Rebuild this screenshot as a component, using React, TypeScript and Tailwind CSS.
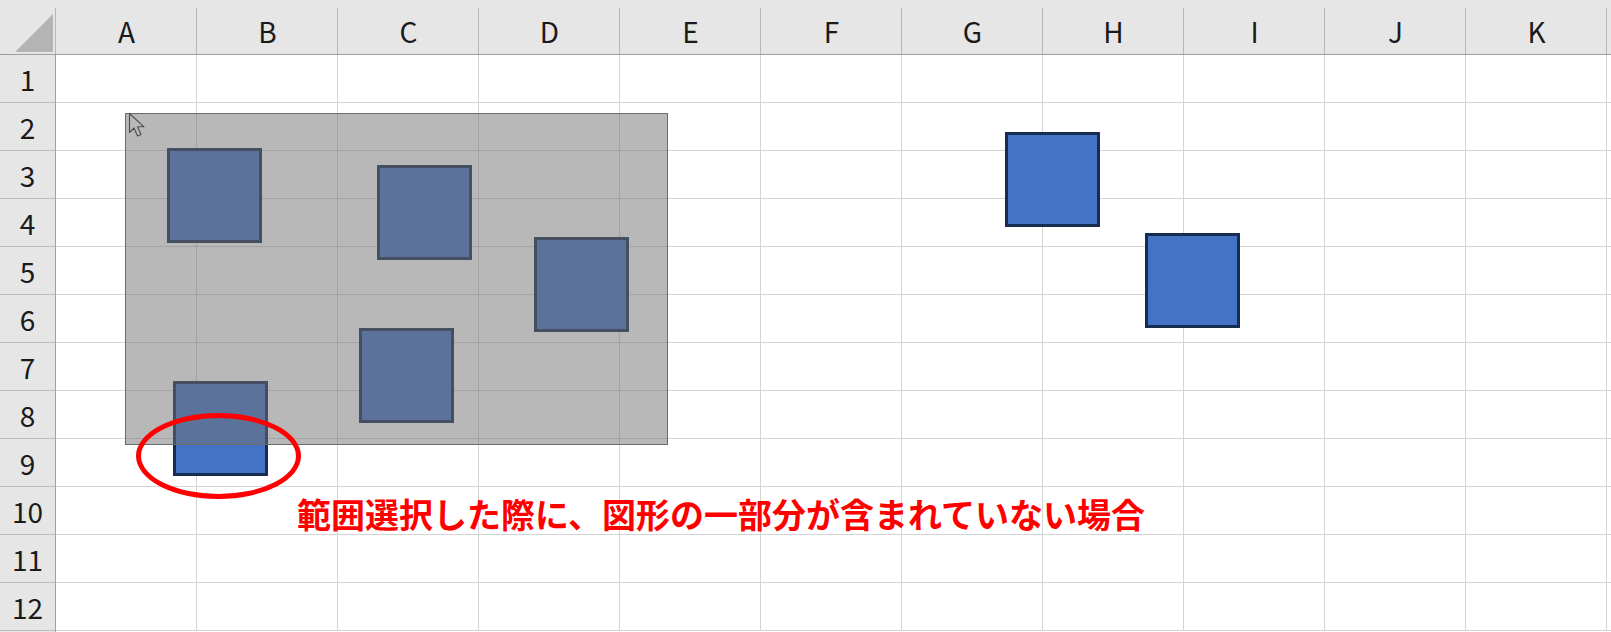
import React from 'react';

const COLS = ['A', 'B', 'C', 'D', 'E', 'F', 'G', 'H', 'I', 'J', 'K'];
const ROWS = Array.from({ length: 12 }, (_, i) => i + 1);

// shapes laid on the sheet: [left, top]
const SHAPES: [number, number][] = [
  [167, 148],
  [377, 165],
  [534, 237],
  [359, 328],
  [173, 381],
  [1005, 132],
  [1145, 233],
];

function HeaderCell({ children }: { children?: React.ReactNode }) {
  return (
    <div className="relative flex items-center justify-center pt-[7px] bg-[#e6e6e6] border-b border-[#9e9e9e] text-[28px] leading-none text-[#1a1a1a] after:absolute after:right-0 after:top-2 after:bottom-0 after:w-px after:bg-[#b8b8b8]">
      {children}
    </div>
  );
}

export default function App() {
  return (
    <div className="relative w-[1611px] h-[632px] overflow-hidden bg-white font-['Noto_Sans_CJK_JP','Noto_Sans',sans-serif]">
      <div className="grid h-full grid-cols-[56px_repeat(11,141px)_1fr] grid-rows-[55px_repeat(12,48px)_1fr]">
        {/* corner */}
        <div className="relative bg-[#e6e6e6] border-b border-[#9e9e9e] after:absolute after:right-0 after:top-2 after:bottom-0 after:w-px after:bg-[#b8b8b8]">
          <svg width="56" height="55" className="block">
            <polygon points="53,14 53,52 15,52" fill="#b4b4b4" />
          </svg>
        </div>
        {COLS.map((c) => (
          <HeaderCell key={c}>{c}</HeaderCell>
        ))}
        <div className="bg-[#e6e6e6] border-b border-[#9e9e9e]" />

        {ROWS.map((r) => (
          <React.Fragment key={r}>
            <div className="flex items-center justify-center bg-[#e6e6e6] border-r border-b border-r-[#9e9e9e] border-b-[#bcbcbc] text-[28px] leading-none text-[#1a1a1a]">
              {r}
            </div>
            {COLS.map((c) => (
              <div key={c} className="border-r border-b border-[#d4d4d4]" />
            ))}
            <div className="border-b border-[#d4d4d4]" />
          </React.Fragment>
        ))}
        <div className="bg-[#e6e6e6] border-r border-[#9e9e9e]" />
      </div>

      {/* shapes */}
      {SHAPES.map(([x, y], i) => (
        <div
          key={i}
          className="absolute w-[95px] h-[95px] bg-[#4472c4] border-[3px] border-[#172c51]"
          style={{ left: x, top: y }}
        />
      ))}

      {/* selection rectangle */}
      <div className="absolute left-[125px] top-[113px] w-[543px] h-[332px] bg-[rgba(114,114,114,0.5)] border border-[#6b6b6b]" />

      {/* mouse pointer */}
      <svg className="absolute left-[128px] top-[112px]" width="20" height="27" viewBox="0 0 20 27">
        <path
          d="M1.5 1.5 L1.5 20.5 L6 16 L9.5 24 L13 22.5 L9.5 14.8 L16 14.8 Z"
          fill="none"
          stroke="#4d4d4d"
          strokeWidth="1.1"
          strokeLinejoin="round"
        />
      </svg>

      {/* red ellipse */}
      <div className="absolute left-[136px] top-[413px] w-[165px] h-[86px] rounded-[50%] border-[5px] border-[#ff0000]" />

      {/* caption */}
      <div className="absolute left-[297px] top-[497px] text-[34px] leading-none font-bold text-[#ff0000] whitespace-nowrap">
        範囲選択した際に、図形の一部分が含まれていない場合
      </div>
    </div>
  );
}
